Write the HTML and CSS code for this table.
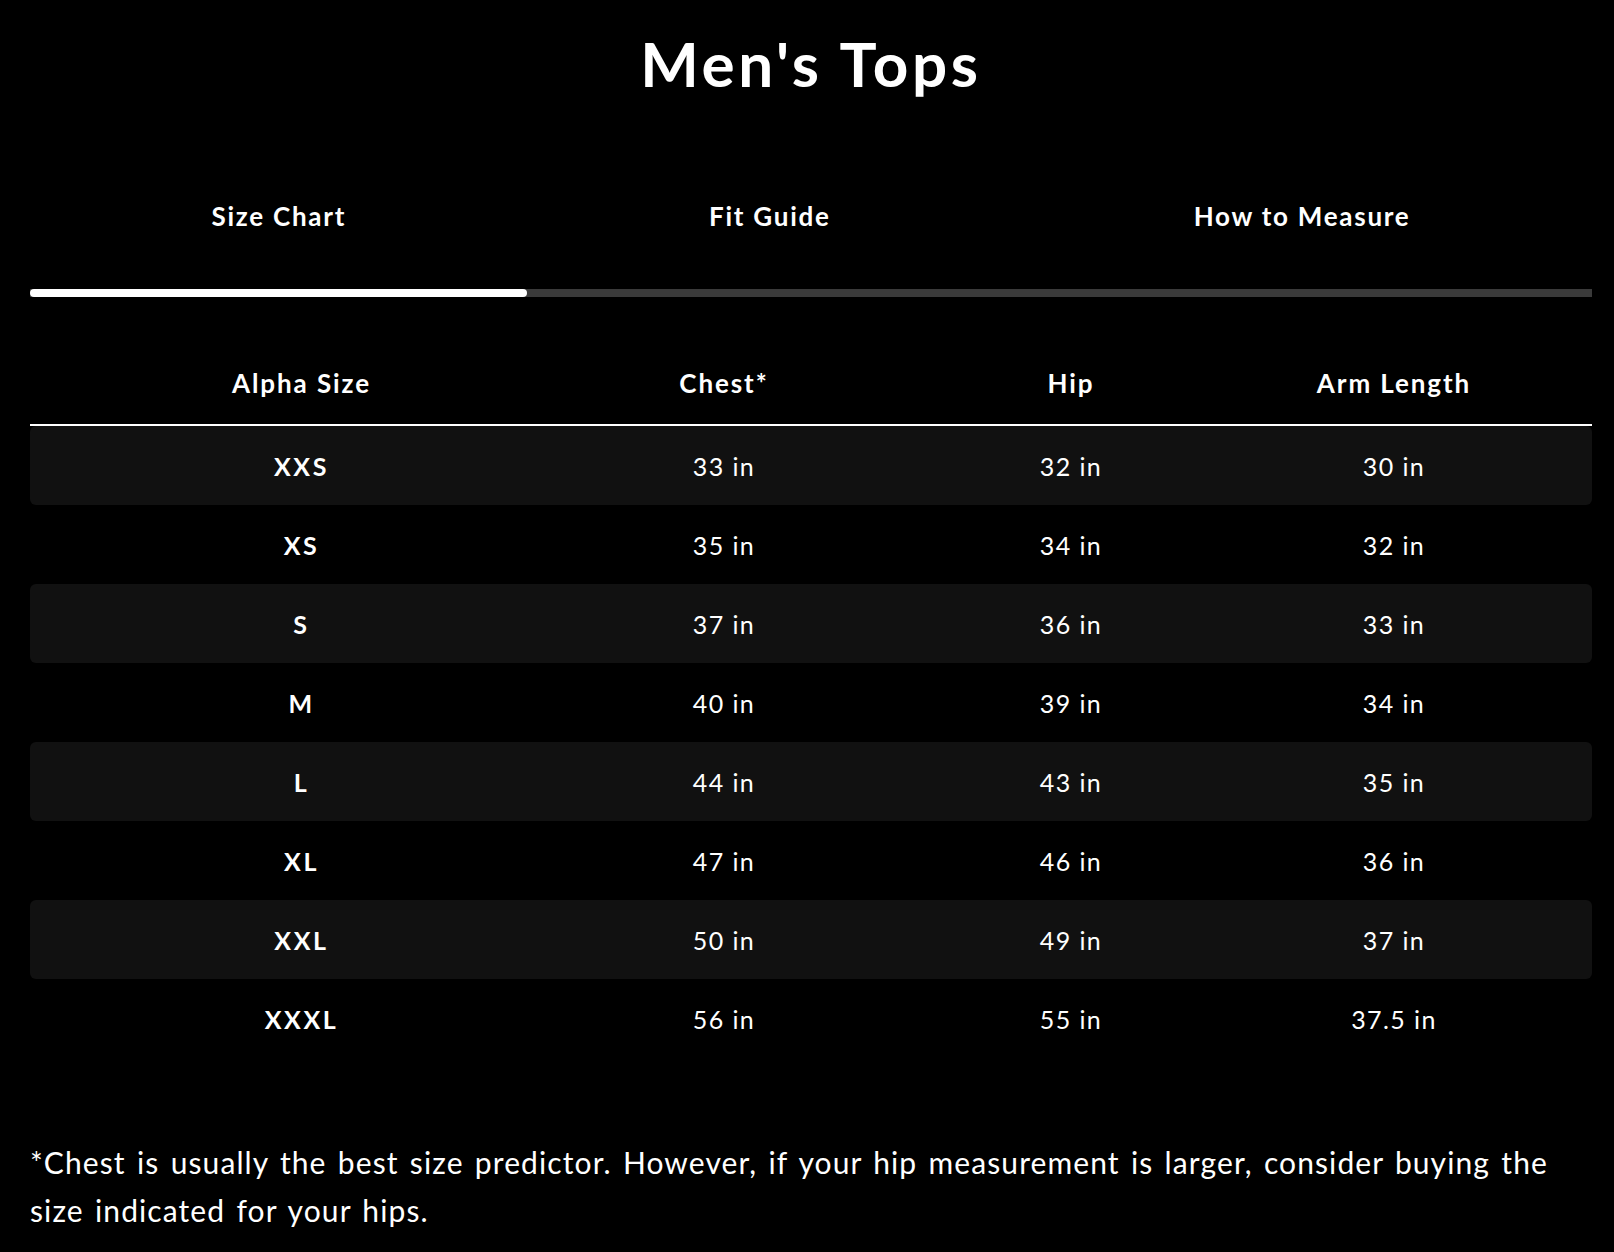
FILE: index.html
```html
<!DOCTYPE html>
<html lang="en">
<head>
<meta charset="utf-8">
<title>Men's Tops</title>
<link rel="stylesheet" href="styles.css">
</head>
<body>
<main class="page">
  <h1 class="title">Men's Tops</h1>
  <nav class="tabs">
    <span class="tab">Size Chart</span>
    <span class="tab">Fit Guide</span>
    <span class="tab">How to Measure</span>
  </nav>
  <div class="track"><div class="indicator"></div></div>
  <div class="chart">
    <div class="row head">
      <div class="cell">Alpha Size</div><div class="cell">Chest*</div><div class="cell">Hip</div><div class="cell last">Arm Length</div>
    </div>
    <div class="row striped"><div class="cell size">XXS</div><div class="cell">33 in</div><div class="cell">32 in</div><div class="cell last">30 in</div></div>
    <div class="row"><div class="cell size">XS</div><div class="cell">35 in</div><div class="cell">34 in</div><div class="cell last">32 in</div></div>
    <div class="row striped"><div class="cell size">S</div><div class="cell">37 in</div><div class="cell">36 in</div><div class="cell last">33 in</div></div>
    <div class="row"><div class="cell size">M</div><div class="cell">40 in</div><div class="cell">39 in</div><div class="cell last">34 in</div></div>
    <div class="row striped"><div class="cell size">L</div><div class="cell">44 in</div><div class="cell">43 in</div><div class="cell last">35 in</div></div>
    <div class="row"><div class="cell size">XL</div><div class="cell">47 in</div><div class="cell">46 in</div><div class="cell last">36 in</div></div>
    <div class="row striped"><div class="cell size">XXL</div><div class="cell">50 in</div><div class="cell">49 in</div><div class="cell last">37 in</div></div>
    <div class="row"><div class="cell size">XXXL</div><div class="cell">56 in</div><div class="cell">55 in</div><div class="cell last">37.5 in</div></div>
  </div>
  <p class="note">*Chest is usually the best size predictor. However, if your hip measurement is larger, consider buying the size indicated for your hips.</p>
</main>
</body>
</html>
```

FILE: styles.css
```css
html, body {
  margin: 0;
  background: #000;
  color: #fff;
  font-family: Lato, "Open Sans", "Noto Sans", sans-serif;
}

.page {
  padding: 27px 22px 0 30px;
}

.title {
  margin: 0;
  font-size: 62px;
  line-height: 72px;
  font-weight: 700;
  letter-spacing: 3.6px;
  text-align: center;
}

.tabs {
  margin-top: 101px;
  display: flex;
  justify-content: space-around;
}

.tab {
  font-size: 26px;
  line-height: 32px;
  font-weight: 700;
  letter-spacing: 1.75px;
}

.track {
  margin-top: 57px;
  height: 8px;
  background: #3a3a3a;
}

.indicator {
  width: 497px;
  height: 8px;
  background: #fff;
  border-radius: 4px;
}

.chart {
  margin-top: 70px;
}

.row {
  display: grid;
  grid-template-columns: 543px 302px 392px 325px;
  align-items: center;
  height: 79px;
  font-size: 25px;
  letter-spacing: 1.4px;
  border-radius: 6px;
}

.row.head {
  height: auto;
  font-size: 26px;
  line-height: 32px;
  font-weight: 700;
  letter-spacing: 1.9px;
  padding-bottom: 25px;
  border-bottom: 2px solid #fff;
  border-radius: 0;
}

.row.striped {
  background: #111;
}

.cell {
  text-align: center;
}

.cell.last {
  padding-right: 71px;
}

.cell.size {
  font-weight: 700;
  letter-spacing: 2.6px;
}

.note {
  margin: 80px 0 0;
  font-size: 30px;
  line-height: 48px;
  letter-spacing: 1.1px;
  word-spacing: 2.5px;
}
```
